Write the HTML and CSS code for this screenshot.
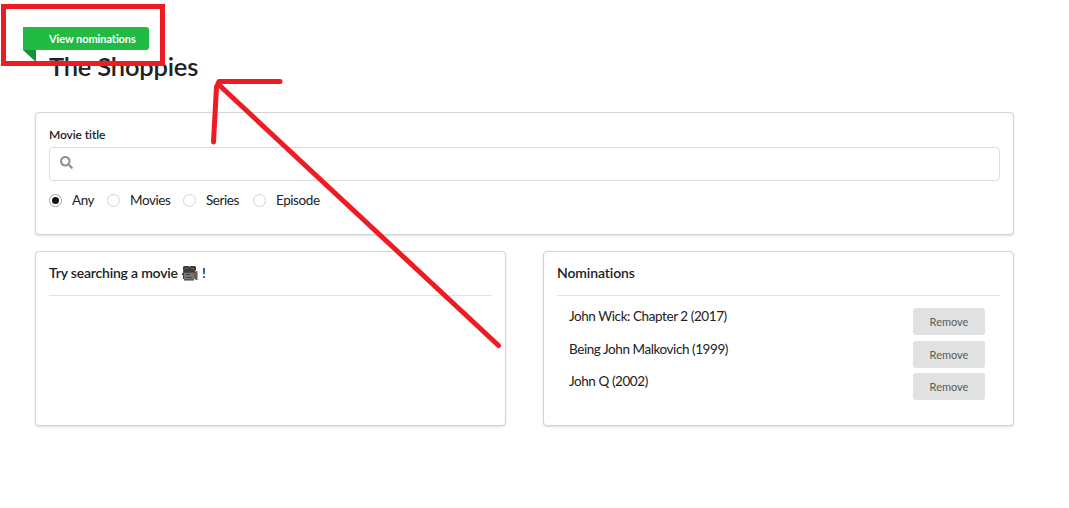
FILE: index.html
```html
<!DOCTYPE html>
<html lang="en">
<head>
<meta charset="utf-8">
<title>The Shoppies</title>
<link rel="stylesheet" href="styles.css">
</head>
<body>
<main class="page">
  <header class="top">
    <a class="ribbon"><span class="ribbon-text">View nominations</span></a>
    <h1 class="title"><span>The Shoppies</span></h1>
  </header>
  <section class="segment search">
    <label class="label" for="q"><span>Movie title</span></label>
    <div class="field">
      <svg class="icon" viewBox="0 0 512 512"><path d="M505 442.700 405.300 343c-4.500-4.500-10.600-7-17-7H372c27.600-35.300 44-79.700 44-128C416 93.100 322.900 0 208 0S0 93.100 0 208s93.100 208 208 208c48.300 0 92.700-16.400 128-44v16.300c0 6.400 2.500 12.500 7 17l99.700 99.700c9.400 9.400 24.600 9.400 33.900 0l28.300-28.300c9.400-9.400 9.400-24.600.1-34zM208 336c-70.700 0-128-57.200-128-128 0-70.700 57.200-128 128-128 70.700 0 128 57.200 128 128 0 70.700-57.200 128-128 128z"/></svg>
      <input id="q" class="input" type="text">
    </div>
    <div class="radios">
      <span class="radio any"><i class="dot on"></i><span>Any</span></span>
      <span class="radio movies"><i class="dot"></i><span>Movies</span></span>
      <span class="radio series"><i class="dot"></i><span>Series</span></span>
      <span class="radio"><i class="dot"></i><span>Episode</span></span>
    </div>
  </section>
  <div class="columns">
    <section class="segment panel">
      <h2 class="heading prompt"><span>Try searching a movie</span>
        <svg class="camera" viewBox="0 0 16 16">
          <path d="M2 6h10v9H2z" fill="#777"/>
          <path d="M12 8.500l2-2.500h1.500v9H14l-2-1.500z" fill="#5c5c5c"/>
          <path d="M0 8h2v2H0zM1 6h12v2H1z" fill="#4b4b4b"/>
          <path d="M2 1h4.500l1 1 1-1H13l1 1v3l-1.500 2H2L1 5V2z" fill="#3c3c3c"/>
          <path d="M3 3.500h3M9 3.500h3M13.500 8v5" stroke="#606060"/>
          <path d="M2 15h10M4.500 12.500h5M4 9.500h4M1.500 8v6" stroke="#404040"/>
          <path d="M10 7.500h1.500v2H10z" fill="#d43c30"/>
        </svg>
        <span>!</span></h2>
    </section>
    <section class="segment panel">
      <h2 class="heading"><span>Nominations</span></h2>
      <ul class="list">
        <li class="item"><span class="name">John Wick: Chapter 2 (2017)</span><button class="button">Remove</button></li>
        <li class="item"><span class="name">Being John Malkovich (1999)</span><button class="button">Remove</button></li>
        <li class="item"><span class="name">John Q (2002)</span><button class="button">Remove</button></li>
      </ul>
    </section>
  </div>
</main>
<svg class="markup" viewBox="0 0 1069 508">
  <rect x="3.500" y="6.500" width="159" height="57"/>
  <path class="stroke" d="M498.500 345.500 218 84M280 81.500H219L216.500 87 213.500 142"/>
</svg>
</body>
</html>
```
FILE: styles.css
```css
* { box-sizing: border-box; }
body {
  margin: 0;
  height: 508px;
  overflow: hidden;
  background: #fff;
  color: #212122;
  font: 13px/18px Lato, "Liberation Sans", sans-serif;
}
.page { width: 979px; margin-left: 35px; padding-top: 27px; }
.top { height: 85px; }
.ribbon {
  position: relative;
  display: block;
  width: 126px;
  height: 23px;
  margin-left: -12px;
  padding-left: 26px;
  border-radius: 0 3px 3px 0;
  background: #21ba45;
  color: #fff;
  font-size: 11px;
  font-weight: 700;
  letter-spacing: -.08px;
  line-height: 23px;
  white-space: nowrap;
}
.ribbon::after {
  content: "";
  position: absolute;
  left: 0;
  top: 100%;
  border-style: solid;
  border-width: 0 13px 12px 0;
  border-color: transparent #198f35 transparent transparent;
}
.title {
  margin: 0 0 0 14px;
  font-size: 25.500px;
  font-weight: 600;
  letter-spacing: -.2px;
  line-height: 33px;
}
.segment {
  border: 1px solid #d4d4d5;
  border-radius: 4px;
  background: #fff;
  box-shadow: 0 1px 2px rgba(34, 36, 38, .15);
  padding: 13px;
}
.search { height: 123px; margin-bottom: 16px; }
.label { display: block; height: 21px; font-size: 12px; font-weight: 600; line-height: 18px; letter-spacing: -.1px; }
.field {
  display: flex;
  align-items: center;
  height: 34px;
  padding: 0 10px;
  border: 1px solid #dededf;
  border-radius: 4px;
}
.icon { width: 13px; height: 13px; margin-top: -3px; fill: #909090; }
.input { flex: 1; border: 0; outline: 0; background: none; font: inherit; }
.radios { display: flex; margin-top: 10px; }
.radio { display: flex; align-items: center; gap: 10px; font-size: 13.500px; letter-spacing: -.43px; white-space: nowrap; }
.any { width: 58px; }
.movies { width: 76px; }
.series { width: 70px; }
.dot {
  display: flex;
  flex: none;
  width: 13px;
  height: 13px;
  margin-top: 1px;
  border: 1px solid #d4d4d5;
  border-radius: 50%;
}
.on { border-color: #a5a6a7; }
.on::after { content: ""; width: 7px; height: 7px; margin: 2px; border-radius: 50%; background: #111; flex: none; }
.columns { display: grid; grid-template-columns: 471px 471px; gap: 37px; }
.panel { height: 175px; }
.heading {
  display: flex;
  align-items: center;
  gap: 4px;
  height: 31px;
  margin: 0 0 12px;
  padding-bottom: 14px;
  border-bottom: 1px solid #e2e2e3;
  font-size: 14px;
  font-weight: 600;
  letter-spacing: -.1px;
}
.prompt { letter-spacing: -.19px; }
.camera { width: 16px; height: 16px; }
.list { margin: 0; padding: 0 15px 0 12px; list-style: none; }
.item { display: flex; justify-content: space-between; height: 32px; }
.item:first-child { height: 33px; }
.name { margin-top: -1px; white-space: nowrap; font-size: 13.500px; letter-spacing: -.43px; }
.button {
  width: 72px;
  height: 27px;
  padding: 0;
  border: 0;
  border-radius: 3px;
  background: #e0e1e2;
  color: #5a5a5b;
  font: 400 11px/27px Lato, "Liberation Sans", sans-serif;
}
.markup {
  position: absolute;
  left: 0;
  top: 0;
  width: 1069px;
  height: 508px;
  fill: none;
  stroke: #ed1c24;
  stroke-width: 5;
  pointer-events: none;
}
.stroke { stroke-linecap: round; stroke-linejoin: round; }
```
